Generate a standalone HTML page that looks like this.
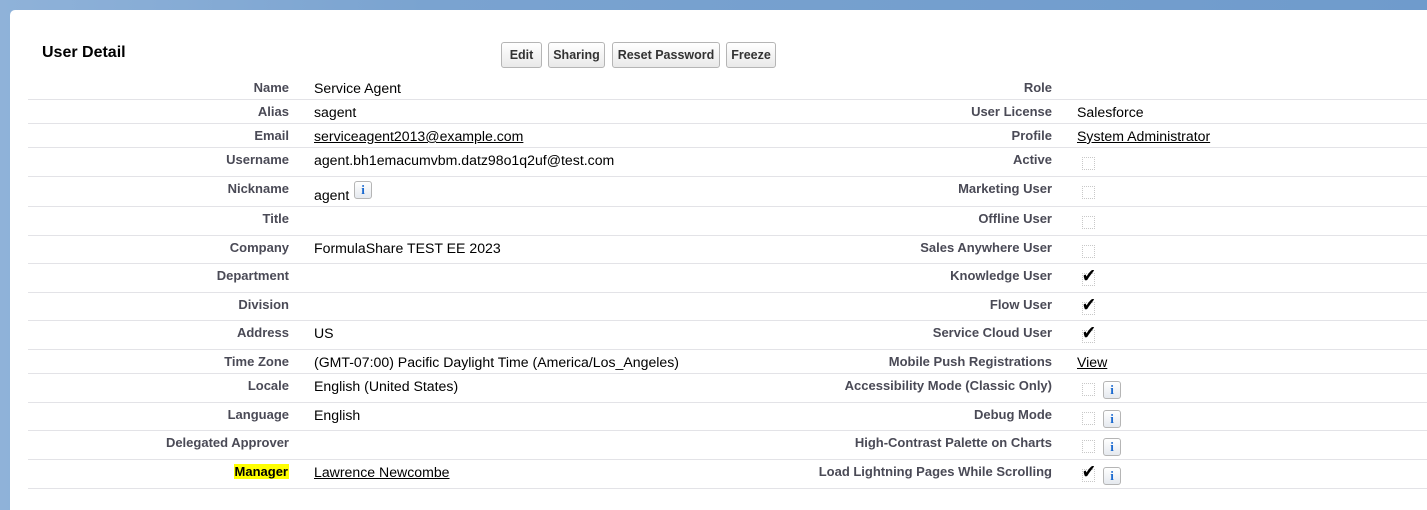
<!DOCTYPE html>
<html><head><meta charset="utf-8"><style>
*{margin:0;padding:0;box-sizing:border-box}
body{width:1427px;height:492px;overflow:hidden;background:linear-gradient(90deg,#8fb2d9 0,#7aa3d0 30%,#6f9bcc 100%);font-family:"Liberation Sans",Arial,sans-serif;position:relative}
.panel{position:absolute;left:10px;top:10px;width:1430px;height:500px;background:#fff;border-radius:5px 0 0 0}
h2{position:absolute;left:42px;top:44px;font-size:16px;font-weight:bold;color:#000}
.btn{position:absolute;top:42px;height:26px;border:1px solid #b5b5b5;border-radius:3px;background:linear-gradient(#fff,#e9e9e9);font-size:12.5px;font-weight:bold;color:#333;line-height:24px;text-align:center}
.row{position:absolute;left:28px;width:1400px;border-bottom:1px solid #e3e3e7}
.l{position:absolute;right:0;font-size:13px;font-weight:bold;color:#4a4a56;text-align:right;white-space:nowrap}
.v{position:absolute;font-size:14.1px;color:#000;white-space:nowrap}
.v a{color:#000;text-decoration:underline}
.cb{position:absolute;width:13px;height:13px;border:1px dotted #c8c8c8}
.ck{position:absolute;font-size:19px;color:#000;left:-2px;top:-9px;transform:scaleX(0.9)}
.i{position:absolute;width:18px;height:18px;border:1px solid #b5b5b5;border-radius:3px;background:linear-gradient(#fff,#e5e9ef);color:#1b6ad0;font:bold 13px "Liberation Serif",serif;text-align:center;line-height:16px}
</style></head><body>
<div class="panel"></div>
<h2>User Detail</h2>
<div class="btn" style="left:501px;width:41px">Edit</div>
<div class="btn" style="left:548px;width:57px">Sharing</div>
<div class="btn" style="left:612px;width:108px">Reset Password</div>
<div class="btn" style="left:726px;width:50px">Freeze</div>
<div id="rows"></div>
<script>
var R=[
["Name","Service Agent","Role","",75,99],
["Alias","sagent","User License","Salesforce",99,123],
["Email","<a>serviceagent2013@example.com</a>","Profile","<a>System Administrator</a>",123,147],
["Username","agent.bh1emacumvbm.datz98o1q2uf@test.com","Active","#0",147,176],
["Nickname","agent#i","Marketing User","#0",176,206],
["Title","","Offline User","#0",206,235],
["Company","FormulaShare TEST EE 2023","Sales Anywhere User","#0",235,263],
["Department","","Knowledge User","#1",263,292],
["Division","","Flow User","#1",292,320],
["Address","US","Service Cloud User","#1",320,349],
["Time Zone","(GMT-07:00) Pacific Daylight Time (America/Los_Angeles)","Mobile Push Registrations","<a>View</a>",349,373],
["Locale","English (United States)","Accessibility Mode (Classic Only)","#0i",373,402],
["Language","English","Debug Mode","#0i",402,430],
["Delegated Approver","","High-Contrast Palette on Charts","#0i",430,459],
["Manager","<a>Lawrence Newcombe</a>","Load Lightning Pages While Scrolling","#1i",459,488]];
var h="";
R.forEach(function(r){
 var t=r[4],b=r[5],ty=t+5;
 h+='<div class="row" style="top:'+t+'px;height:'+(b-t+1)+'px"></div>';
 var lab=r[0]=="Manager"?'<span style="background:#ffff00;color:#000;padding:0 1px">Manager</span>':r[0];
 h+='<div class="l" style="right:'+(1427-289)+'px;top:'+ty+'px">'+lab+'</div>';
 if(r[1]=="agent#i"){h+='<div class="v" style="left:314px;top:'+(ty+6)+'px">agent</div><div class="i" style="left:354px;top:'+(ty)+'px">i</div>';}
 else h+='<div class="v" style="left:314px;top:'+(ty)+'px">'+r[1]+'</div>';
 h+='<div class="l" style="right:'+(1427-1052)+'px;top:'+ty+'px">'+r[2]+'</div>';
 var v=r[3];
 if(v[0]=="#"){
  var cy=ty+5;
  h+='<div class="cb" style="left:1082px;top:'+cy+'px">'+(v[1]=="1"?'<span class="ck">✔</span>':'')+'</div>';
  if(v.indexOf("i")>0)h+='<div class="i" style="left:1103px;top:'+(cy-2)+'px">i</div>';
 } else h+='<div class="v" style="left:1077px;top:'+(ty)+'px">'+v+'</div>';
});
document.getElementById("rows").innerHTML=h;
</script>
</body></html>
